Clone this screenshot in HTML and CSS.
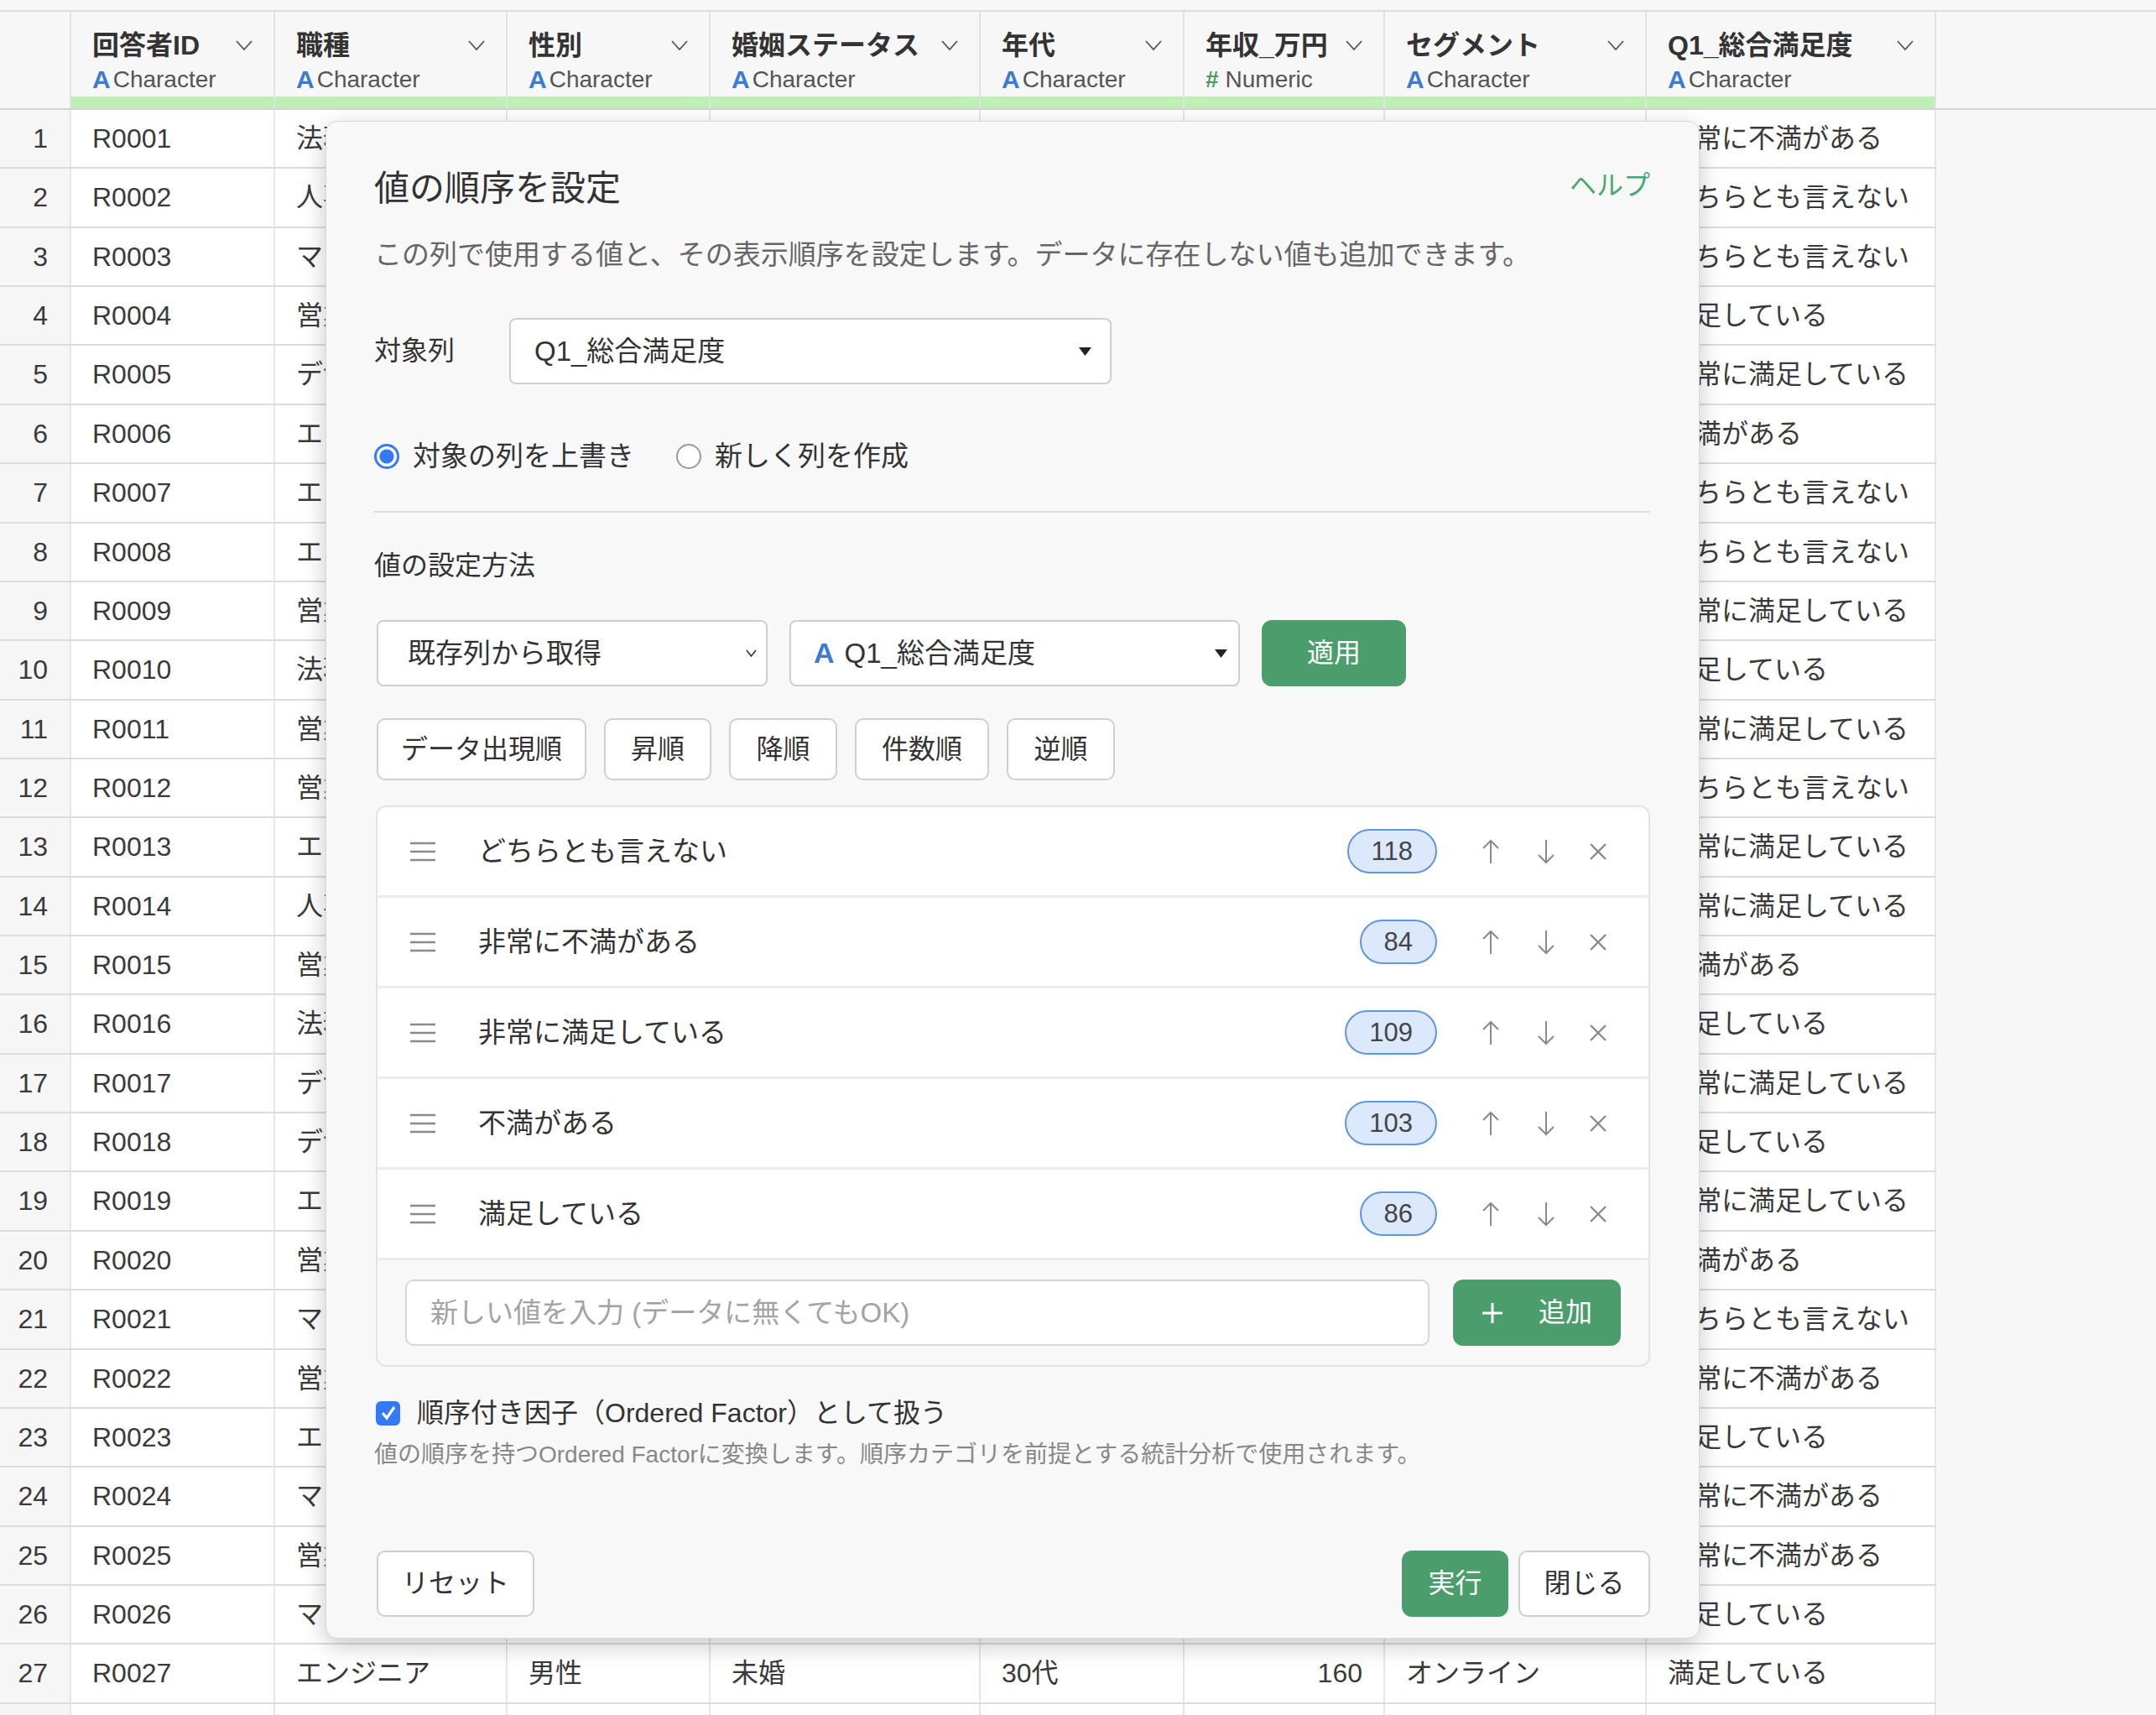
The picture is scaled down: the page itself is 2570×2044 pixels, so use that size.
FILE: index.html
```html
<!DOCTYPE html>
<html lang="ja">
<head>
    <meta charset="UTF-8">
    <title>値の順序を設定</title>
    <link rel="stylesheet" href="styles.css">
</head>
<body>
<div class="sheet">
    <div class="sheet-head">
        <div class="hcell corner"></div>
    </div>
    <div class="sheet-body"></div>
</div>

<div class="modal">
    <div class="m-head">
        <span class="m-title">値の順序を設定</span>
        <span class="m-help">ヘルプ</span>
    </div>
    <div class="m-desc">この列で使用する値と、その表示順序を設定します。データに存在しない値も追加できます。</div>

    <div class="target">
        <span class="target-label">対象列</span>
        <div class="select sel-target">
            <span>Q1_総合満足度</span>
            <svg class="caret" width="15" height="10" viewBox="0 0 15 10"><polygon points="0,0 15,0 7.5,10" fill="#222"/></svg>
        </div>
    </div>

    <div class="radios">
        <div class="radio"><span class="dot on"></span>対象の列を上書き</div>
        <div class="radio"><span class="dot"></span>新しく列を作成</div>
    </div>

    <div class="divider"></div>

    <div class="section-label">値の設定方法</div>

    <div class="method">
        <div class="select sel-a">
            <span>既存列から取得</span>
            <svg width="13" height="9" viewBox="0 0 13 9"><polyline points="1,1 6.5,8 12,1" fill="none" stroke="#333" stroke-width="1.6"/></svg>
        </div>
        <div class="select sel-b">
            <span class="sel-b-text"><b class="type-a big">A</b>Q1_総合満足度</span>
            <svg class="caret" width="15" height="10" viewBox="0 0 15 10"><polygon points="0,0 15,0 7.5,10" fill="#222"/></svg>
        </div>
        <div class="btn-green apply">適用</div>
    </div>

    <div class="sorts">
        <div class="sort s-data">データ出現順</div>
        <div class="sort s-asc">昇順</div>
        <div class="sort s-desc">降順</div>
        <div class="sort s-count">件数順</div>
        <div class="sort s-rev">逆順</div>
    </div>

    <div class="list">
        <div class="items"></div>
        <div class="add">
            <div class="add-input">新しい値を入力 (データに無くてもOK)</div>
            <div class="btn-green add-btn">
                <svg width="26" height="26" viewBox="0 0 26 26"><path d="M13 1V25M1 13H25" stroke="#fff" stroke-width="3"/></svg>
                <span>追加</span>
            </div>
        </div>
    </div>

    <div class="check">
        <span class="box"><svg width="20" height="18" viewBox="0 0 20 18"><polyline points="3,9 8,15 17,2" fill="none" stroke="#fff" stroke-width="3.2"/></svg></span>
        順序付き因子（Ordered Factor）として扱う
    </div>
    <div class="note">値の順序を持つOrdered Factorに変換します。順序カテゴリを前提とする統計分析で使用されます。</div>

    <div class="foot">
        <div class="btn-white reset">リセット</div>
        <div class="spacer"></div>
        <div class="btn-green run">実行</div>
        <div class="btn-white close">閉じる</div>
    </div>
</div>

<script>
    //列の定義
    var cols = [
        {name:'回答者ID', type:'c'},
        {name:'職種', type:'c'},
        {name:'性別', type:'c'},
        {name:'婚姻ステータス', type:'c'},
        {name:'年代', type:'c'},
        {name:'年収_万円', type:'n'},
        {name:'セグメント', type:'c'},
        {name:'Q1_総合満足度', type:'c'}
    ];
    var chev = '<svg width="20" height="12" viewBox="0 0 20 12"><polyline points="1,1 10,11 19,1" fill="none" stroke="#555" stroke-width="1.8"/></svg>';

    var head = document.querySelector('.sheet-head');
    var str = '';
    for(var i=0;i<cols.length;i++){
        var t = cols[i].type === 'n'
            ? '<b class="type-n">#</b>Numeric'
            : '<b class="type-a">A</b>Character';
        str += '<div class="hcell"><div class="hin">' +
               '<div class="hname"><span>' + cols[i].name + '</span>' + chev + '</div>' +
               '<div class="htype">' + t + '</div></div>' +
               '<div class="hbar"></div></div>';
    }
    head.innerHTML += str;

    //データ部分
    var rows = [
        ['法務','女性','既婚','40代',620,'店舗','非常に不満がある'],
        ['人事','女性','未婚','30代',480,'オンライン','どちらとも言えない'],
        ['マーケティング','男性','既婚','30代',550,'店舗','どちらとも言えない'],
        ['営業','男性','既婚','40代',700,'店舗','満足している'],
        ['デザイナー','女性','未婚','20代',380,'オンライン','非常に満足している'],
        ['エンジニア','男性','未婚','20代',450,'オンライン','不満がある'],
        ['エンジニア','男性','既婚','30代',650,'オンライン','どちらとも言えない'],
        ['エンジニア','女性','未婚','30代',580,'店舗','どちらとも言えない'],
        ['営業','男性','既婚','50代',820,'店舗','非常に満足している'],
        ['法務','男性','既婚','50代',900,'店舗','満足している'],
        ['営業','女性','未婚','20代',400,'オンライン','非常に満足している'],
        ['営業','男性','既婚','40代',720,'店舗','どちらとも言えない'],
        ['エンジニア','男性','既婚','40代',780,'オンライン','非常に満足している'],
        ['人事','女性','既婚','40代',560,'店舗','非常に満足している'],
        ['営業','男性','未婚','30代',520,'オンライン','不満がある'],
        ['法務','女性','未婚','30代',600,'店舗','満足している'],
        ['デザイナー','男性','未婚','20代',360,'オンライン','非常に満足している'],
        ['デザイナー','女性','既婚','30代',470,'店舗','満足している'],
        ['エンジニア','女性','未婚','20代',430,'オンライン','非常に満足している'],
        ['営業','男性','既婚','30代',540,'店舗','不満がある'],
        ['マーケティング','女性','未婚','20代',390,'オンライン','どちらとも言えない'],
        ['営業','男性','既婚','50代',850,'店舗','非常に不満がある'],
        ['エンジニア','男性','既婚','40代',760,'オンライン','満足している'],
        ['マーケティング','女性','既婚','40代',610,'店舗','非常に不満がある'],
        ['営業','女性','未婚','30代',500,'オンライン','非常に不満がある'],
        ['マーケティング','男性','未婚','30代',530,'店舗','満足している'],
        ['エンジニア','男性','未婚','30代',160,'オンライン','満足している'],
        ['営業','女性','既婚','40代',590,'店舗','どちらとも言えない']
    ];
    var body = document.querySelector('.sheet-body');
    str = '';
    for(var r=0;r<rows.length;r++){
        var d = rows[r];
        var id = 'R' + ('000' + (r+1)).slice(-4);
        str += '<div class="row"><div class="cell num">' + (r+1) + '</div>' +
               '<div class="cell">' + id + '</div>';
        for(var c=0;c<d.length;c++){
            str += '<div class="cell' + (c === 4 ? ' right' : '') + '">' + d[c] + '</div>';
        }
        str += '</div>';
    }
    body.innerHTML = str;

    //値のリスト
    var items = [
        ['どちらとも言えない',118],
        ['非常に不満がある',84],
        ['非常に満足している',109],
        ['不満がある',103],
        ['満足している',86]
    ];
    var grip = '<svg class="grip" width="30" height="24" viewBox="0 0 30 24"><path d="M0 2H30M0 12H30M0 22H30" stroke="#8a8a8a" stroke-width="2.4"/></svg>';
    var up = '<svg width="24" height="30" viewBox="0 0 24 30"><path d="M12 2V29M3 11L12 2L21 11" fill="none" stroke="#8a8a8a" stroke-width="2"/></svg>';
    var down = '<svg width="24" height="30" viewBox="0 0 24 30"><path d="M12 1V28M3 19L12 28L21 19" fill="none" stroke="#8a8a8a" stroke-width="2"/></svg>';
    var del = '<svg class="del" width="22" height="22" viewBox="0 0 22 22"><path d="M2 2L20 20M20 2L2 20" stroke="#8a8a8a" stroke-width="2.4"/></svg>';
    var list = document.querySelector('.items');
    str = '';
    for(var k=0;k<items.length;k++){
        str += '<div class="item">' + grip +
               '<span class="item-text">' + items[k][0] + '</span>' +
               '<span class="badge">' + items[k][1] + '</span>' +
               '<span class="acts">' + up + down + del + '</span></div>';
    }
    list.innerHTML = str;
</script>
</body>
</html>
```

FILE: styles.css
```css
html,body{
    margin:0;
}
body{
    height: 2044px;
    overflow: hidden;
    position: relative;
    background-color: #f7f7f7;
    font-family: "Liberation Sans", "Noto Sans CJK JP", sans-serif;
    line-height: 1.2;
    color: #333;
}

/* 表 */
.sheet-head{
    margin-top: 12px;
    height: 115px;
    border-top: 2px solid #dcdcdc;
    border-bottom: 2px solid #d4d4d4;
    display: grid;
    grid-template-columns: 85px 243px 277px 242px 322px 243px 239px 312px 345px;
}
.hcell{
    display: flex;
    flex-direction: column;
    border-right: 2px solid #e2e2e2;
    min-width: 0;
}
.hin{
    flex: 1;
    padding: 18px 25px 0 25px;
}
.hbar{
    height: 14px;
    background-color: #bff0b3;
}
.hname{
    height: 44px;
    display: flex;
    align-items: center;
    justify-content: space-between;
    font-size: 32px;
    font-weight: bold;
    color: #333;
    white-space: nowrap;
}
.htype{
    height: 38px;
    display: flex;
    align-items: center;
    font-size: 28px;
    color: #555;
    white-space: nowrap;
}
.type-a{
    color: #3b7bd6;
    font-size: 30px;
    margin-right: 3px;
}
.type-n{
    color: #4e9c5c;
    font-size: 28px;
    margin-right: 8px;
}

.row{
    width: 2308px;
    height: 70.37px;
    box-sizing: border-box;
    border-bottom: 2px solid #dcdcdc;
    display: grid;
    grid-template-columns: 85px 243px 277px 242px 322px 243px 239px 312px 345px;
}
.cell{
    display: flex;
    align-items: center;
    padding: 0 25px;
    box-sizing: border-box;
    border-right: 2px solid #e6e6e6;
    background-color: #fff;
    font-size: 32px;
    color: #3a3a3a;
    white-space: nowrap;
    overflow: hidden;
}
.cell.num{
    justify-content: flex-end;
    padding-right: 26px;
    background-color: #f6f6f6;
}
.cell.right{
    justify-content: flex-end;
}

/* ダイアログ */
.modal{
    position: absolute;
    left: 388px;
    top: 144px;
    width: 1638px;
    box-sizing: border-box;
    padding: 50px 58px 25px 57px;
    background-color: #f8f8f8;
    border: 1px solid #d8d8d8;
    border-radius: 14px;
    box-shadow: 0 8px 28px rgba(0,0,0,0.22);
    z-index: 10;
}
.m-head{
    height: 60px;
    display: flex;
    align-items: center;
    justify-content: space-between;
}
.m-title{
    font-size: 42px;
    color: #333;
}
.m-help{
    font-size: 32px;
    color: #46a96f;
    margin-top: -8px;
}
.m-desc{
    margin-top: 25px;
    line-height: 48px;
    font-size: 33px;
    color: #666;
    white-space: nowrap;
}

.target{
    margin-top: 51px;
    display: flex;
    align-items: center;
}
.target-label{
    width: 161px;
    font-size: 32px;
}
.select{
    height: 79px;
    box-sizing: border-box;
    border: 2px solid #cfcfcf;
    border-radius: 8px;
    background-color: #fff;
    display: flex;
    align-items: center;
    justify-content: space-between;
    font-size: 33px;
    color: #333;
}
.sel-target{
    width: 718px;
    padding: 0 22px 0 28px;
}

.radios{
    margin-top: 66px;
    height: 40px;
    display: flex;
    align-items: center;
}
.radio{
    display: flex;
    align-items: center;
    gap: 16px;
    font-size: 33px;
    margin-right: 50px;
}
.dot{
    width: 30px;
    height: 30px;
    box-sizing: border-box;
    border: 2px solid #9a9a9a;
    border-radius: 50%;
    background-color: #fff;
}
.dot.on{
    border: 3px solid #3479f5;
    background: radial-gradient(circle, #3479f5 0 8px, #fff 9px);
}

.divider{
    margin-top: 45px;
    height: 2px;
    background-color: #dedede;
}
.section-label{
    margin-top: 39px;
    line-height: 48px;
    font-size: 32px;
}

.method{
    margin-top: 41px;
    height: 79px;
    display: flex;
    gap: 26px;
    padding-left: 3px;
}
.sel-a{
    width: 466px;
    padding: 0 11px 0 35px;
}
.sel-b{
    width: 537px;
    padding: 0 13px 0 27px;
}
.sel-b-text{
    display: flex;
    align-items: center;
}
.type-a.big{
    font-size: 34px;
    margin-right: 12px;
}
.btn-green{
    background-color: #4b9e6b;
    color: #fff;
    border-radius: 12px;
    display: flex;
    align-items: center;
    justify-content: center;
    font-size: 32px;
}
.apply{
    width: 172px;
}

.sorts{
    margin-top: 38px;
    display: flex;
    gap: 21px;
    padding-left: 3px;
}
.sort{
    height: 74px;
    box-sizing: border-box;
    border: 2px solid #cfcfcf;
    border-radius: 10px;
    background-color: #fff;
    display: flex;
    align-items: center;
    justify-content: center;
    font-size: 32px;
}
.s-data{ width: 250px; }
.s-asc{ width: 128px; }
.s-desc{ width: 129px; }
.s-count{ width: 160px; }
.s-rev{ width: 129px; }

.list{
    margin-top: 30px;
    margin-left: 2px;
    border: 2px solid #e3e3e3;
    border-radius: 12px;
    background-color: #f8f8f8;
    overflow: hidden;
}
.item{
    height: 108px;
    box-sizing: border-box;
    border-bottom: 3px solid #ececec;
    background-color: #fff;
    display: flex;
    align-items: center;
    padding: 0 49px 0 39px;
}
.item-text{
    flex: 1;
    margin-left: 51px;
    font-size: 33px;
    color: #333;
}
.badge{
    height: 53px;
    box-sizing: border-box;
    padding: 0 27px;
    border: 2px solid #5f95e4;
    border-radius: 27px;
    background-color: #dce8fb;
    display: flex;
    align-items: center;
    font-size: 31px;
    color: #444;
}
.acts{
    display: flex;
    align-items: center;
    gap: 42px;
    margin-left: 52px;
}
.acts .del{
    margin-left: -3px;
}
.add{
    display: flex;
    gap: 28px;
    padding: 23px 33px 23px 33px;
}
.add-input{
    flex: 1;
    height: 79px;
    box-sizing: border-box;
    border: 2px solid #d6d6d6;
    border-radius: 10px;
    background-color: #fff;
    display: flex;
    align-items: center;
    padding-left: 28px;
    font-size: 33px;
    color: #a3a3a3;
}
.add-btn{
    width: 200px;
    height: 79px;
    gap: 42px;
}

.check{
    margin-top: 35px;
    height: 40px;
    display: flex;
    align-items: center;
    gap: 20px;
    font-size: 32px;
    color: #333;
}
.box{
    width: 29px;
    height: 29px;
    margin-left: 2px;
    border-radius: 6px;
    background-color: #3479f5;
    display: flex;
    align-items: center;
    justify-content: center;
}
.note{
    margin-top: 12px;
    line-height: 36px;
    font-size: 28px;
    color: #888;
    white-space: nowrap;
}

.foot{
    margin-top: 96px;
    height: 79px;
    display: flex;
    gap: 12px;
}
.spacer{
    flex: 1;
}
.btn-white{
    box-sizing: border-box;
    border: 2px solid #cfcfcf;
    border-radius: 10px;
    background-color: #fff;
    display: flex;
    align-items: center;
    justify-content: center;
    font-size: 32px;
}
.reset{
    width: 188px;
    margin-left: 3px;
}
.run{
    width: 127px;
}
.close{
    width: 157px;
}
```
